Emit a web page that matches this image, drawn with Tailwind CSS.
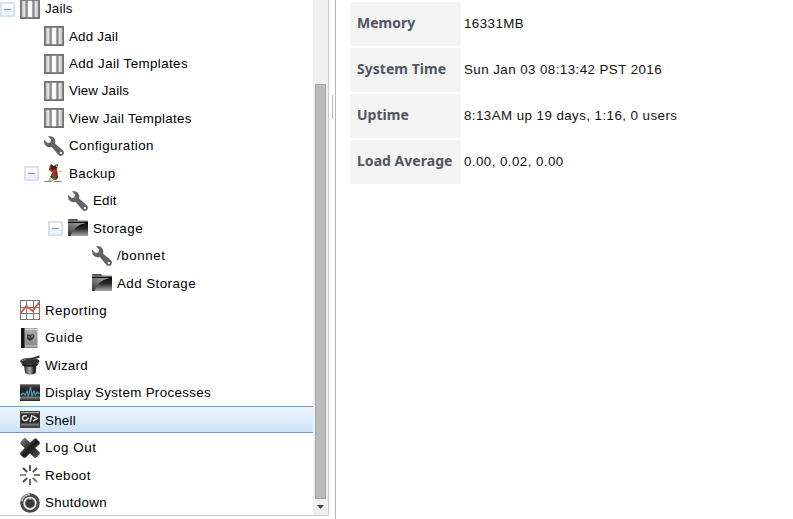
<!DOCTYPE html>
<html lang="en">
<head>
<meta charset="utf-8">
<title>System</title>
<script src="https://cdn.jsdelivr.net/npm/@tailwindcss/browser@4"></script>
</head>
<body class="bg-white text-black">
<svg class="absolute h-0 w-0">
  <defs>
    <linearGradient id="dark" x1="0" y1="0" x2="1" y2="1"><stop offset="0" stop-color="#888"/><stop offset=".5" stop-color="#1c1c1c"/><stop offset="1" stop-color="#555"/></linearGradient>
    <linearGradient id="fold" x1="0" y1="0" x2="0" y2="1"><stop offset="0" stop-color="#080808"/><stop offset=".45" stop-color="#252525"/><stop offset="1" stop-color="#aaa"/></linearGradient>
    <linearGradient id="shine" x1="0" y1="1" x2=".8" y2="0"><stop offset="0" stop-color="#333"/><stop offset="1" stop-color="#a5a5a5"/></linearGradient>
    <linearGradient id="hat" x1="0" x2="1"><stop offset="0" stop-color="#222"/><stop offset=".5" stop-color="#aaa"/><stop offset=".8" stop-color="#222"/></linearGradient>
    <linearGradient id="book" x1="0" y1="0" x2="0" y2="1"><stop offset="0" stop-color="#b0b0b0"/><stop offset="1" stop-color="#858585"/></linearGradient>
    <linearGradient id="screen" x1="0" y1="0" x2="0" y2="1"><stop offset="0" stop-color="#555"/><stop offset=".3" stop-color="#252525"/><stop offset=".65" stop-color="#222"/><stop offset=".8" stop-color="#777"/><stop offset="1" stop-color="#222"/></linearGradient>
    <symbol id="jail" viewBox="0 0 20 20"><path fill="#8a8a8c" d="M0 0h20v20H0z"/><path fill="#c4c4c4" d="M1.500 2h4v16h-4zM7.500 2h5v16h-5zM14.500 2h4v16h-4z"/><path fill="#e4e4e4" d="M3.300 2h1.800v16H3.300zM14.900 2h1.800v16h-1.800z"/><path fill="#fff" d="M8.200 1.600h3.600v16.800H8.200z"/><path fill="none" stroke="#707174" stroke-width="1.500" d="M.75.75h18.500v18.500H.75z"/></symbol>
    <symbol id="wrench" viewBox="0 0 20 20"><path fill="#626367" fill-rule="evenodd" d="M4 .4C7.500-.5 11 1.300 11.300 5c.1 1 0 1.700-.3 2.500L18.600 13.900c1.800 1.700 1.700 3.700.3 5.100-1.300 1.300-3.400 1.200-4.900-.4L7.700 11C4.300 12 .6 10.200.1 6.200c-.1-.8 0-1.700.2-2.400L3.500 7l2.900-.6.9-2.900zM16.900 15.800a1.200 1.200 0 1 0 .01 0z"/></symbol>
    <symbol id="folder" viewBox="0 0 20 20"><path fill="#505050" d="M0 3V2q0-1 1-1h8q1 0 1 2z"/><path fill="#777" d="M0 2.500h20V5H0z"/><path fill="url(#fold)" d="M0 4h20v14H0z"/><path fill="url(#shine)" d="M0 5h18Q6 7 2.500 18H0z"/></symbol>
    <symbol id="backup" viewBox="0 0 20 20"><path fill="#43251e" d="M6 3l1-2 3 2 3-2 1 1-1 4 1 9-3 2-5-3 3-5-4-3z"/><path fill="#b03020" d="M5 5l4 2 4-2v3l-2 3 2 2-2 2-4-2 2-3-4-3z"/><path fill="#d69c6c" d="M12 2l2 1v2l-2-1zM15 7.500l3 .5v1l-3-.5zM5 3l1.500.5L6 6z"/><path fill="#4f7240" d="M8 14.500l4-.5 1 3H9z"/><path fill="#c9bfae" d="M6 14l3 4H4z"/><path stroke="#777" d="M.5 18.500h7m3 0h7"/></symbol>
    <symbol id="chart" viewBox="0 0 20 20"><path fill="#fff" d="M0 0h20v20H0z"/><path fill="none" stroke="#777" d="M.5 0v20M6.500 0v20M13.500 0v20M19.500 0v20M0 .5h20M0 7.500h20M0 13.500h20M0 19.500h20"/><path fill="none" stroke="#e4533e" stroke-width="1.900" d="M.5 13.500L6.300 6l6.200 5L19.500 2"/></symbol>
    <symbol id="guide" viewBox="0 0 20 20"><path fill="url(#book)" d="M1 0h16.500v20H1z"/><path fill="#151515" d="M1 0h3.500v20H1z"/><path fill="#ccc" d="M5 1h12v1H5zM5 17.500h12v1H5z"/><path fill="#3b3b3b" d="M7 6l3 1 3-1 1.500 2-1.500 3-3 2-3-2z"/><path fill="#aaa" d="M8 8l2 1-1 1zM11 8l2-1-1 3z"/></symbol>
    <symbol id="wizard" viewBox="0 0 20 20"><path fill="url(#hat)" d="M3.500 7h13l-.7 11Q10 21.500 5 18z"/><ellipse cx="9.800" cy="6.300" rx="9.700" ry="3.500" fill="#303030"/><path fill="#888" d="M1 5.500q8-4 16-.6-8-2-14 1z"/><path stroke="#333" stroke-width="2" d="M5 6L19.500 1.500"/><path fill="#181818" d="M1 8q9 4 18 0l-2 3q-7 1.500-14 0z"/></symbol>
    <symbol id="process" viewBox="0 0 20 20"><path fill="url(#screen)" d="M0 1h20v17H0z"/><path fill="#888" d="M0 1h20v1H0z"/><path fill="none" stroke="#5b9eab" stroke-width="1.200" d="M1 12l2-2 2 2 2-4 1.500 5L10.500 4l1.500 9 2-5 1.500 4 2-3 2 2"/></symbol>
    <symbol id="shell" viewBox="0 0 20 20"><path fill="url(#screen)" d="M0 1h20v17H0z"/><path fill="none" stroke="#4a4040" d="M.5 1.500h19v16H.5z"/><path fill="#aaa4a4" d="M1 2h18v1.200H1z"/><path fill="none" stroke="#ddd" stroke-width="1.600" d="M7 6Q2.500 5 2.500 8t4 2.500L8.500 7.500M12 5l-2 7M13 6l4 2.500-4 2.500"/></symbol>
    <symbol id="cross" viewBox="0 0 20 20"><path fill="url(#dark)" stroke="#555" stroke-width=".7" d="M1 4l3-3.500q1-.5 2 .5l4 4 4-3.500q1-1.500 2-1L19.500 4v2L15 10l4.500 4.500v1.500L16 19.500q-1 .5-2-.5l-4-4-4.500 4.500q-1 .5-2 0L.5 16.500l.3-2L5 10 .7 6z"/></symbol>
    <symbol id="reboot" viewBox="0 0 20 20"><g stroke-width="1.900" fill="none"><path stroke="#555" d="M10 0v6M17 3l-4.200 4.200"/><path stroke="#777" d="M20 10h-6M17 17l-4.200-4.200"/><path stroke="#666" d="M10 20v-6"/><path stroke="#444" d="M3 17l4.200-4.200M3 3l4.200 4.200"/><path stroke="#888" d="M0 10h6"/></g></symbol>
    <symbol id="power" viewBox="0 0 20 20"><circle cx="10" cy="10" r="9.800" fill="#4a4a4a"/><path fill="none" stroke="#bbb" stroke-width="1.700" d="M1.800 8a8.300 8.300 0 0 1 8-6.300"/><circle cx="10" cy="10.300" r="5.800" fill="#555" stroke="#ececec" stroke-width="1.700"/><circle cx="10" cy="10.500" r="3.800" fill="#3a3a3a"/><path stroke="#ddd" stroke-width="1.500" d="M10 4v2.500"/></symbol>
    <symbol id="minus" viewBox="0 0 15 15"><path fill="#f0f4fb" stroke="#cad5ea" stroke-width="1.300" d="M.9.900h13.200v13.200H.9z"/><path fill="#fff" d="M2 2h11v5H2z"/><path stroke="#7f99c6" stroke-width="1.300" d="M4 7.500h7"/></symbol>
  </defs>
</svg>

<div class="flex h-[519px] w-[793px] overflow-hidden">
  <aside class="flex h-[516px] w-[329px] shrink-0 border-r border-b border-[#c8c8c8]">
    <nav class="-mt-[5.550px] h-[521px] w-[313px] shrink-0 overflow-hidden font-['Liberation_Sans',Arial,sans-serif] text-[13.330px]" id="tree"></nav>
    <div class="flex w-[15px] flex-col items-center bg-[#f0f0f0] pt-[84px]">
      <div class="h-[415px] w-[11px] border border-[#a5a5a5] bg-[#bababa]"></div>
      <svg class="mt-[6px] h-[4px] w-[7px]" viewBox="0 0 7 4"><path fill="#444" d="M0 0h7L3.500 4z"/></svg>
    </div>
  </aside>
  <div class="flex w-[7px] shrink-0 justify-between border-r border-[#b5b5bb] pl-[3px]">
    <div class="mt-[95px] h-[24px] w-px bg-[#b4b8cb]"></div>
  </div>
  <main class="pt-[2px] pl-[14px]">
    <dl class="grid grid-cols-[111px_auto] gap-x-[3px] gap-y-[2px] font-['Liberation_Sans',Arial,sans-serif] text-[13.330px] leading-[44px] tracking-[0.440px] text-[#111]">
      <dt class="h-[44px] bg-[#f4f4f4] pl-[7px] font-['Noto_Sans',sans-serif] text-[14px] leading-[42px] font-bold tracking-[0.030px] text-[#505661]">Memory</dt><dd>16331MB</dd>
      <dt class="h-[44px] bg-[#f4f4f4] pl-[7px] font-['Noto_Sans',sans-serif] text-[14px] leading-[42px] font-bold tracking-[0.030px] text-[#505661]">System Time</dt><dd>Sun Jan 03 08:13:42 PST 2016</dd>
      <dt class="h-[44px] bg-[#f4f4f4] pl-[7px] font-['Noto_Sans',sans-serif] text-[14px] leading-[42px] font-bold tracking-[0.030px] text-[#505661]">Uptime</dt><dd>8:13AM up 19 days, 1:16, 0 users</dd>
      <dt class="h-[44px] bg-[#f4f4f4] pl-[7px] font-['Noto_Sans',sans-serif] text-[14px] leading-[42px] font-bold tracking-[0.030px] text-[#505661]">Load Average</dt><dd>0.00, 0.02, 0.00</dd>
    </dl>
  </main>
</div>
<script>
  // [depth, icon, label, letter spacing, expandable]
  const items = [
    [0,'jail','Jails',.2,1],[1,'jail','Add Jail',.22],[1,'jail','Add Jail Templates',.41],[1,'jail','View Jails',.1],[1,'jail','View Jail Templates',.33],
    [1,'wrench','Configuration',.43],[1,'backup','Backup',.35,1],[2,'wrench','Edit',.2],[2,'folder','Storage',.48,1],[3,'wrench','/bonnet',.6],[3,'folder','Add Storage',.45],
    [0,'chart','Reporting',.48],[0,'guide','Guide',.5],[0,'wizard','Wizard',.22],[0,'process','Display System Processes',.34],[0,'shell','Shell',.25],
    [0,'cross','Log Out',.6],[0,'reboot','Reboot',.5],[0,'power','Shutdown',.35]];
  document.getElementById('tree').innerHTML = items.map(([d, icon, label, track, open]) => {
    const sel = label === 'Shell' ? 'border-[#769dc0] bg-linear-to-b from-[#edf6fd] to-[#cce2f7]' : 'border-transparent';
    return `<div class="flex h-[27.450px] items-center border-y ${sel}" style="padding-left:${d * 24}px">
      <span class="flex w-[20px] shrink-0">${open ? '<svg class="mt-[2px] h-[15px] w-[15px]"><use href="#minus"/></svg>' : ''}</span>
      <svg class="mt-px h-[20px] w-[20px] shrink-0"><use href="#${icon}"/></svg>
      <span class="pt-[2px] pl-[5px] whitespace-nowrap" style="letter-spacing:${track}px">${label}</span></div>`;
  }).join('');
</script>
</body>
</html>
